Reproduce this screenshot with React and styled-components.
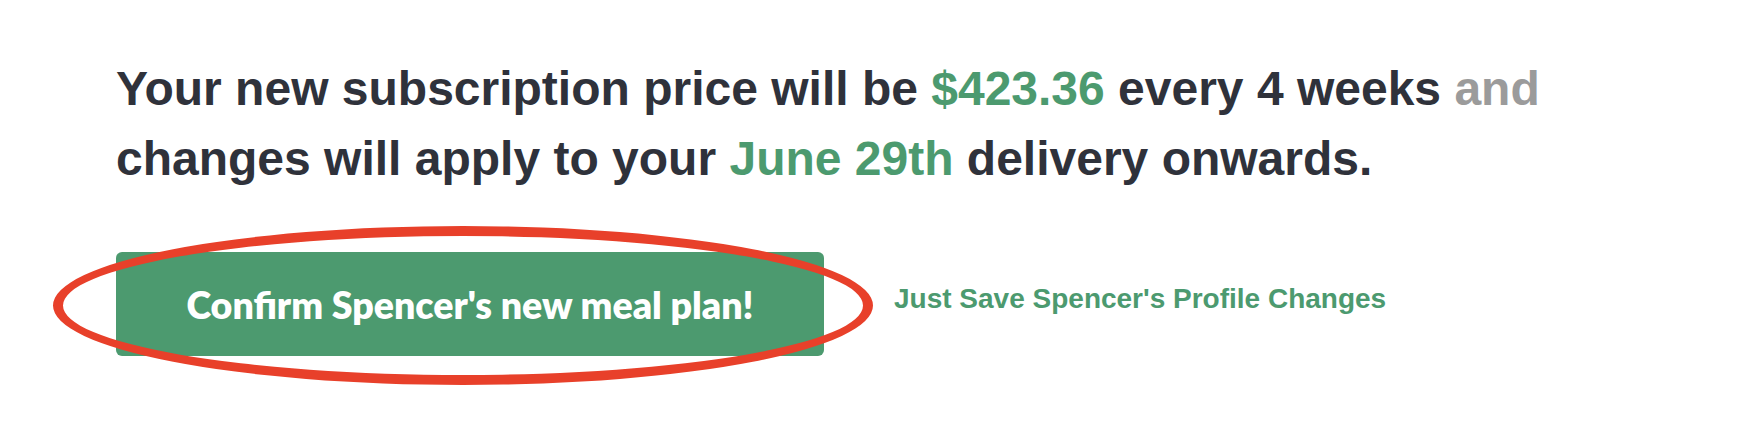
import styled, { createGlobalStyle } from 'styled-components';

const GlobalStyle = createGlobalStyle`
    html, body {
        margin: 0;
        padding: 0;
        background: #ffffff;
    }
`

export default function App () {
    return (
        <>
            <GlobalStyle />
            <Page>
                <Summary>
                    Your new subscription price will be <Highlight>$423.36</Highlight> every 4 weeks <Muted>and</Muted>
                    <br />
                    changes will apply to your <Highlight>June 29th</Highlight> delivery onwards.
                </Summary>
                <Actions>
                    <ConfirmWrap>
                        <ConfirmButton>Confirm Spencer's new meal plan!</ConfirmButton>
                        <Ring aria-hidden="true" />
                    </ConfirmWrap>
                    <SaveLink href="#">Just Save Spencer's Profile Changes</SaveLink>
                </Actions>
            </Page>
        </>
    )
}

const Page = styled.div`
    padding: 54px 0 40px 116px;
    font-family: "Liberation Sans", Arial, sans-serif;
`
const Summary = styled.p`
    margin: 0;
    font-size: 48px;
    line-height: 70px;
    font-weight: 700;
    color: #2f323b;
    white-space: nowrap;
`
const Highlight = styled.span`
    color: #4c9a6f;
`
const Muted = styled.span`
    color: #9b9b9b;
`
const Actions = styled.div`
    display: flex;
    align-items: center;
    gap: 70px;
    margin-top: 58px;
`
const ConfirmWrap = styled.div`
    position: relative;
    width: 708px;
    height: 104px;
`
const ConfirmButton = styled.button`
    display: flex;
    align-items: center;
    justify-content: center;
    width: 100%;
    height: 100%;
    padding: 0;
    border: none;
    border-radius: 6px;
    background: #4c9a6f;
    color: #ffffff;
    font-family: Lato, "Noto Sans", sans-serif;
    font-weight: 800;
    font-size: 37.5px;
    cursor: pointer;
`
// hand-drawn annotation ring around the button
const Ring = styled.div`
    position: absolute;
    left: -63px;
    top: -26px;
    width: 820px;
    height: 159px;
    box-sizing: border-box;
    border: 10px solid #e8402a;
    border-radius: 50%;
    pointer-events: none;
`
const SaveLink = styled.a`
    color: #4c9a6f;
    font-size: 28px;
    font-weight: 700;
    text-decoration: none;
    margin-top: -10px;
`
